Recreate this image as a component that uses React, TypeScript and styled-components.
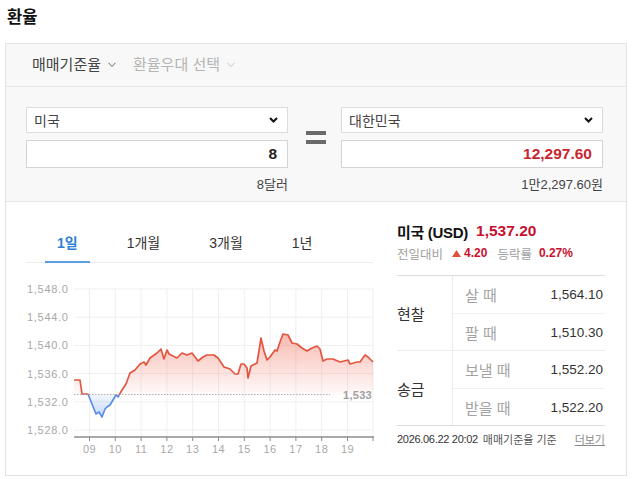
import React from "react";
import styled, { createGlobalStyle } from "styled-components";

const GlobalStyle = createGlobalStyle`
  html, body { margin: 0; padding: 0; background: #fff; }
  body {
    font-family: "Liberation Sans", "Noto Sans CJK KR", sans-serif;
    color: #333;
    -webkit-font-smoothing: antialiased;
  }
  * { box-sizing: border-box; }
`;

const Page = styled.div`
  width: 632px;
  height: 479px;
  overflow: hidden;
`;

const Title = styled.h1`
  margin: 0;
  padding-left: 7px;
  height: 34px;
  line-height: 34px;
  font-size: 16.5px;
  font-weight: 700;
  color: #111;
`;

const Box = styled.div`
  margin: 9px 5px 0 5px;
  width: 622px;
  border: 1px solid #e2e2e2;
  background: #f8f8f8;
`;

const OptionBar = styled.div`
  height: 43px;
  display: flex;
  align-items: center;
  gap: 17px;
  padding-left: 26px;
  border-bottom: 1px solid #e6e6e6;
`;

const OptionItem = styled.span<{ $dim?: boolean }>`
  display: inline-flex;
  align-items: center;
  gap: 7px;
  font-size: 15px;
  line-height: 20px;
  color: ${(p) => (p.$dim ? "#b4b4b4" : "#444")};
`;

const Converter = styled.div`
  display: grid;
  grid-template-columns: 262px 53px 262px;
  padding: 20px 22px 7px 20px;
  border-bottom: 1px solid #e6e6e6;
`;

const Column = styled.div`
  display: flex;
  flex-direction: column;
`;

const Select = styled.div`
  height: 26px;
  display: flex;
  align-items: center;
  justify-content: space-between;
  padding: 0 9px 0 7px;
  background: #fff;
  border: 1px solid #dcdcdc;
  font-size: 14px;
  color: #444;
`;

const Input = styled.div<{ $red?: boolean }>`
  margin-top: 7px;
  height: 28px;
  display: flex;
  align-items: center;
  justify-content: flex-end;
  padding-right: 10px;
  background: #fff;
  border: 1px solid #d4d4d4;
  font-size: 15.5px;
  font-weight: 700;
  color: ${(p) => (p.$red ? "#c8262f" : "#222")};
`;

const SubText = styled.div`
  margin-top: 8px;
  height: 18px;
  line-height: 18px;
  text-align: right;
  font-size: 13px;
  color: #444;
`;

const EqualsCell = styled.div`
  height: 61px;
  display: flex;
  flex-direction: column;
  align-items: center;
  justify-content: center;
  gap: 5px;
  padding-left: 2px;
`;

const EqualsBar = styled.span`
  width: 20px;
  height: 4px;
  background: #6a6a6a;
`;

const ChartSection = styled.div`
  height: 273px;
  background: #fff;
  display: flex;
  padding: 18px 0 0 20px;
`;

const ChartColumn = styled.div`
  width: 347px;
  display: flex;
  flex-direction: column;
`;

const TabList = styled.div`
  display: flex;
  gap: 25px;
  padding-left: 19px;
  border-bottom: 1px solid #ececec;
`;

const Tab = styled.div<{ $active?: boolean }>`
  height: 43px;
  margin-bottom: -1px;
  padding: 2px 12px 0;
  display: flex;
  align-items: center;
  font-size: 14px;
  font-weight: ${(p) => (p.$active ? 700 : 400)};
  color: ${(p) => (p.$active ? "#2f80d8" : "#333")};
  border-bottom: 2px solid ${(p) => (p.$active ? "#5d9de3" : "transparent")};
`;

const ChartSvg = styled.svg`
  display: block;
  overflow: visible;
  margin-top: 1px;
`;

const InfoColumn = styled.div`
  margin-left: 24px;
  padding-top: 1px;
  width: 208px;
  display: flex;
  flex-direction: column;
`;

const Headline = styled.div`
  height: 20px;
  display: flex;
  align-items: center;
  gap: 8px;
`;

const Country = styled.span`
  font-size: 15px;
  font-weight: 700;
  color: #111;
  letter-spacing: -0.3px;
`;

const Price = styled.span`
  font-size: 15.5px;
  font-weight: 700;
  color: #c8102e;
`;

const ChangeLine = styled.div`
  margin-top: 4px;
  height: 16px;
  display: flex;
  align-items: center;
  font-size: 12.5px;
  color: #a0a0a0;
`;

const ChangeValue = styled.span<{ $gap?: number }>`
  margin-left: ${(p) => p.$gap ?? 0}px;
  color: #c8102e;
  font-weight: 700;
  font-size: 12px;
  display: inline-flex;
  align-items: center;
  gap: 3px;
`;

const ChangeLabel = styled.span`
  margin-left: 10px;
`;

const RateTable = styled.div`
  margin-top: 14px;
  border-top: 1px solid #dcdcdc;
  border-bottom: 1px solid #dcdcdc;
`;

const Group = styled.div<{ $last?: boolean }>`
  display: grid;
  grid-template-columns: 56px 1fr;
  border-bottom: ${(p) => (p.$last ? "none" : "1px solid #ebebeb")};
`;

const GroupLabel = styled.div`
  display: flex;
  align-items: center;
  font-size: 15px;
  color: #333;
  border-right: 1px solid #ebebeb;
`;

const RateRow = styled.div<{ $first?: boolean }>`
  height: 37px;
  display: flex;
  align-items: center;
  justify-content: space-between;
  padding: 0 2px 0 12px;
  border-top: ${(p) => (p.$first ? "none" : "1px solid #f0f0f0")};
`;

const RateName = styled.span`
  font-size: 15px;
  color: #a3a3a3;
`;

const RateValue = styled.span`
  font-size: 13.5px;
  color: #333;
`;

const Footer = styled.div`
  margin-top: 5px;
  height: 16px;
  display: flex;
  align-items: center;
  font-size: 11px;
  letter-spacing: -0.3px;
  color: #333;
`;

const FooterNote = styled.span`
  margin-left: 5px;
  color: #555;
  letter-spacing: 0;
`;

const MoreLink = styled.span`
  margin-left: auto;
  color: #8a8a8a;
  text-decoration: underline;
  letter-spacing: 0;
`;

const ThinChevron = ({ color }: { color: string }) => (
  <svg width="8" height="6" viewBox="0 0 8 6">
    <path d="M0.6 0.8 L4 4.6 L7.4 0.8" fill="none" stroke={color} strokeWidth="1" />
  </svg>
);

const BoldChevron = () => (
  <svg width="9" height="6" viewBox="0 0 9 6">
    <path d="M1 1 L4.5 4.5 L8 1" fill="none" stroke="#111" strokeWidth="2" />
  </svg>
);

const points: [number, number][] = [
  [74, 379], [80, 379], [82, 393], [88, 393], [92, 403], [96, 413], [99, 411], [102, 416],
  [105, 408], [107, 406], [110, 404], [113, 399], [116, 394], [118, 396], [122, 389],
  [126, 383], [130, 372], [135, 369], [140, 363], [144, 361], [146, 364], [150, 357],
  [157, 352], [161, 348], [164, 358], [167, 349], [169, 353], [177, 357], [182, 352],
  [187, 354], [192, 352], [198, 360], [203, 356], [207, 354], [214, 354], [218, 357],
  [224, 366], [230, 368], [235, 373], [238, 373], [241, 363], [244, 363], [247, 367],
  [248, 377], [251, 365], [255, 363], [257, 362], [261, 337], [264, 350], [267, 359],
  [270, 356], [275, 349], [277, 350], [280, 341], [283, 333], [288, 334], [292, 342],
  [297, 343], [302, 347], [307, 350], [312, 347], [317, 345], [320, 348], [323, 360],
  [327, 358], [333, 358], [340, 361], [348, 359], [350, 363], [357, 361], [360, 361],
  [365, 354], [368, 356], [373, 361],
];

const BASE = 393.5;
const yLabels = [
  { v: "1,548.0", y: 288 },
  { v: "1,544.0", y: 316.2 },
  { v: "1,540.0", y: 344.4 },
  { v: "1,536.0", y: 372.6 },
  { v: "1,532.0", y: 400.8 },
  { v: "1,528.0", y: 429 },
];
const hours = ["09", "10", "11", "12", "13", "14", "15", "16", "17", "18", "19"];
const hourX = (i: number) => 89.5 + 25.8 * i;

const Chart = () => {
  const line = points.map((p, i) => `${i ? "L" : "M"}${p[0]} ${p[1]}`).join(" ");
  const area = `${line} L373 ${BASE} L74 ${BASE} Z`;
  return (
    <ChartSvg width="352" height="197" viewBox="26 263 352 197">
      <defs>
        <linearGradient id="redFill" x1="0" y1="335" x2="0" y2={BASE} gradientUnits="userSpaceOnUse">
          <stop offset="0" stopColor="#f0604c" stopOpacity="0.42" />
          <stop offset="1" stopColor="#f0604c" stopOpacity="0.03" />
        </linearGradient>
        <linearGradient id="blueFill" x1="0" y1={BASE} x2="0" y2="416" gradientUnits="userSpaceOnUse">
          <stop offset="0" stopColor="#5b93e8" stopOpacity="0.08" />
          <stop offset="1" stopColor="#5b93e8" stopOpacity="0.35" />
        </linearGradient>
        <clipPath id="above">
          <rect x="60" y="280" width="330" height={BASE - 280 + 0.3} />
        </clipPath>
        <clipPath id="below">
          <rect x="60" y={BASE + 0.3} width="330" height="60" />
        </clipPath>
      </defs>
      {yLabels.map((l) => (
        <line key={l.v} x1="74" x2="373" y1={l.y} y2={l.y} stroke="#efefef" strokeWidth="1" />
      ))}
      {hours.map((h, i) => (
        <line key={h} x1={hourX(i)} x2={hourX(i)} y1="288" y2="436" stroke="#efefef" strokeWidth="1" />
      ))}
      <line x1="373" x2="373" y1="288" y2="436" stroke="#efefef" strokeWidth="1" />
      {yLabels.map((l) => (
        <text
          key={l.v + "t"}
          x="27"
          y={l.y + 4}
          fontSize="11"
          fill="#a8a8a8"
          letterSpacing="0.7"
          fontFamily="Liberation Sans, sans-serif"
        >
          {l.v}
        </text>
      ))}
      <path d={area} fill="url(#redFill)" clipPath="url(#above)" />
      <path d={area} fill="url(#blueFill)" clipPath="url(#below)" />
      <line x1="74" x2="330" y1={BASE} y2={BASE} stroke="#9a9a9a" strokeWidth="0.8" strokeDasharray="1.5 1.5" />
      <path d={line} fill="none" stroke="#e4553f" strokeWidth="1.7" strokeLinejoin="round" clipPath="url(#above)" />
      <path d={line} fill="none" stroke="#5a8ee6" strokeWidth="1.7" strokeLinejoin="round" clipPath="url(#below)" />
      <text x="372" y={BASE + 4} textAnchor="end" fontSize="11" fontWeight="700" fill="#a0a0a0" letterSpacing="0.3" fontFamily="Liberation Sans, sans-serif">
        1,533
      </text>
      <line x1="74" x2="374" y1="436" y2="436" stroke="#8c8c8c" strokeWidth="1.5" />
      {hours.map((h, i) => (
        <g key={h + "x"}>
          <line x1={hourX(i)} x2={hourX(i)} y1="436" y2="440" stroke="#8c8c8c" strokeWidth="1" />
          <text x={hourX(i)} y="452" textAnchor="middle" fontSize="11" fill="#a8a8a8" letterSpacing="0.5" fontFamily="Liberation Sans, sans-serif">
            {h}
          </text>
        </g>
      ))}
      <line x1="373" x2="373" y1="436" y2="440" stroke="#8c8c8c" strokeWidth="1" />
    </ChartSvg>
  );
};

const Triangle = () => (
  <svg width="9" height="7" viewBox="0 0 9 7">
    <path d="M4.5 0 L9 7 L0 7 Z" fill="#e0503a" />
  </svg>
);

export default function App() {
  return (
    <Page>
      <GlobalStyle />
      <Title>환율</Title>
      <Box>
        <OptionBar>
          <OptionItem>
            매매기준율 <ThinChevron color="#666" />
          </OptionItem>
          <OptionItem $dim>
            환율우대 선택 <ThinChevron color="#c4c4c4" />
          </OptionItem>
        </OptionBar>
        <Converter>
          <Column>
            <Select>
              미국 <BoldChevron />
            </Select>
            <Input>8</Input>
            <SubText>8달러</SubText>
          </Column>
          <EqualsCell>
            <EqualsBar />
            <EqualsBar />
          </EqualsCell>
          <Column>
            <Select>
              대한민국 <BoldChevron />
            </Select>
            <Input $red>12,297.60</Input>
            <SubText>1만2,297.60원</SubText>
          </Column>
        </Converter>
        <ChartSection>
          <ChartColumn>
            <TabList>
              <Tab $active>1일</Tab>
              <Tab>1개월</Tab>
              <Tab>3개월</Tab>
              <Tab>1년</Tab>
            </TabList>
            <Chart />
          </ChartColumn>
          <InfoColumn>
            <Headline>
              <Country>미국 (USD)</Country>
              <Price>1,537.20</Price>
            </Headline>
            <ChangeLine>
              전일대비
              <ChangeValue $gap={9}>
                <Triangle />
                4.20
              </ChangeValue>
              <ChangeLabel>등락률</ChangeLabel>
              <ChangeValue $gap={7}>0.27%</ChangeValue>
            </ChangeLine>
            <RateTable>
              <Group>
                <GroupLabel>현찰</GroupLabel>
                <div>
                  <RateRow $first>
                    <RateName>살 때</RateName>
                    <RateValue>1,564.10</RateValue>
                  </RateRow>
                  <RateRow>
                    <RateName>팔 때</RateName>
                    <RateValue>1,510.30</RateValue>
                  </RateRow>
                </div>
              </Group>
              <Group $last>
                <GroupLabel>송금</GroupLabel>
                <div>
                  <RateRow $first>
                    <RateName>보낼 때</RateName>
                    <RateValue>1,552.20</RateValue>
                  </RateRow>
                  <RateRow>
                    <RateName>받을 때</RateName>
                    <RateValue>1,522.20</RateValue>
                  </RateRow>
                </div>
              </Group>
            </RateTable>
            <Footer>
              2026.06.22 20:02
              <FooterNote>매매기준율 기준</FooterNote>
              <MoreLink>더보기</MoreLink>
            </Footer>
          </InfoColumn>
        </ChartSection>
      </Box>
    </Page>
  );
}
